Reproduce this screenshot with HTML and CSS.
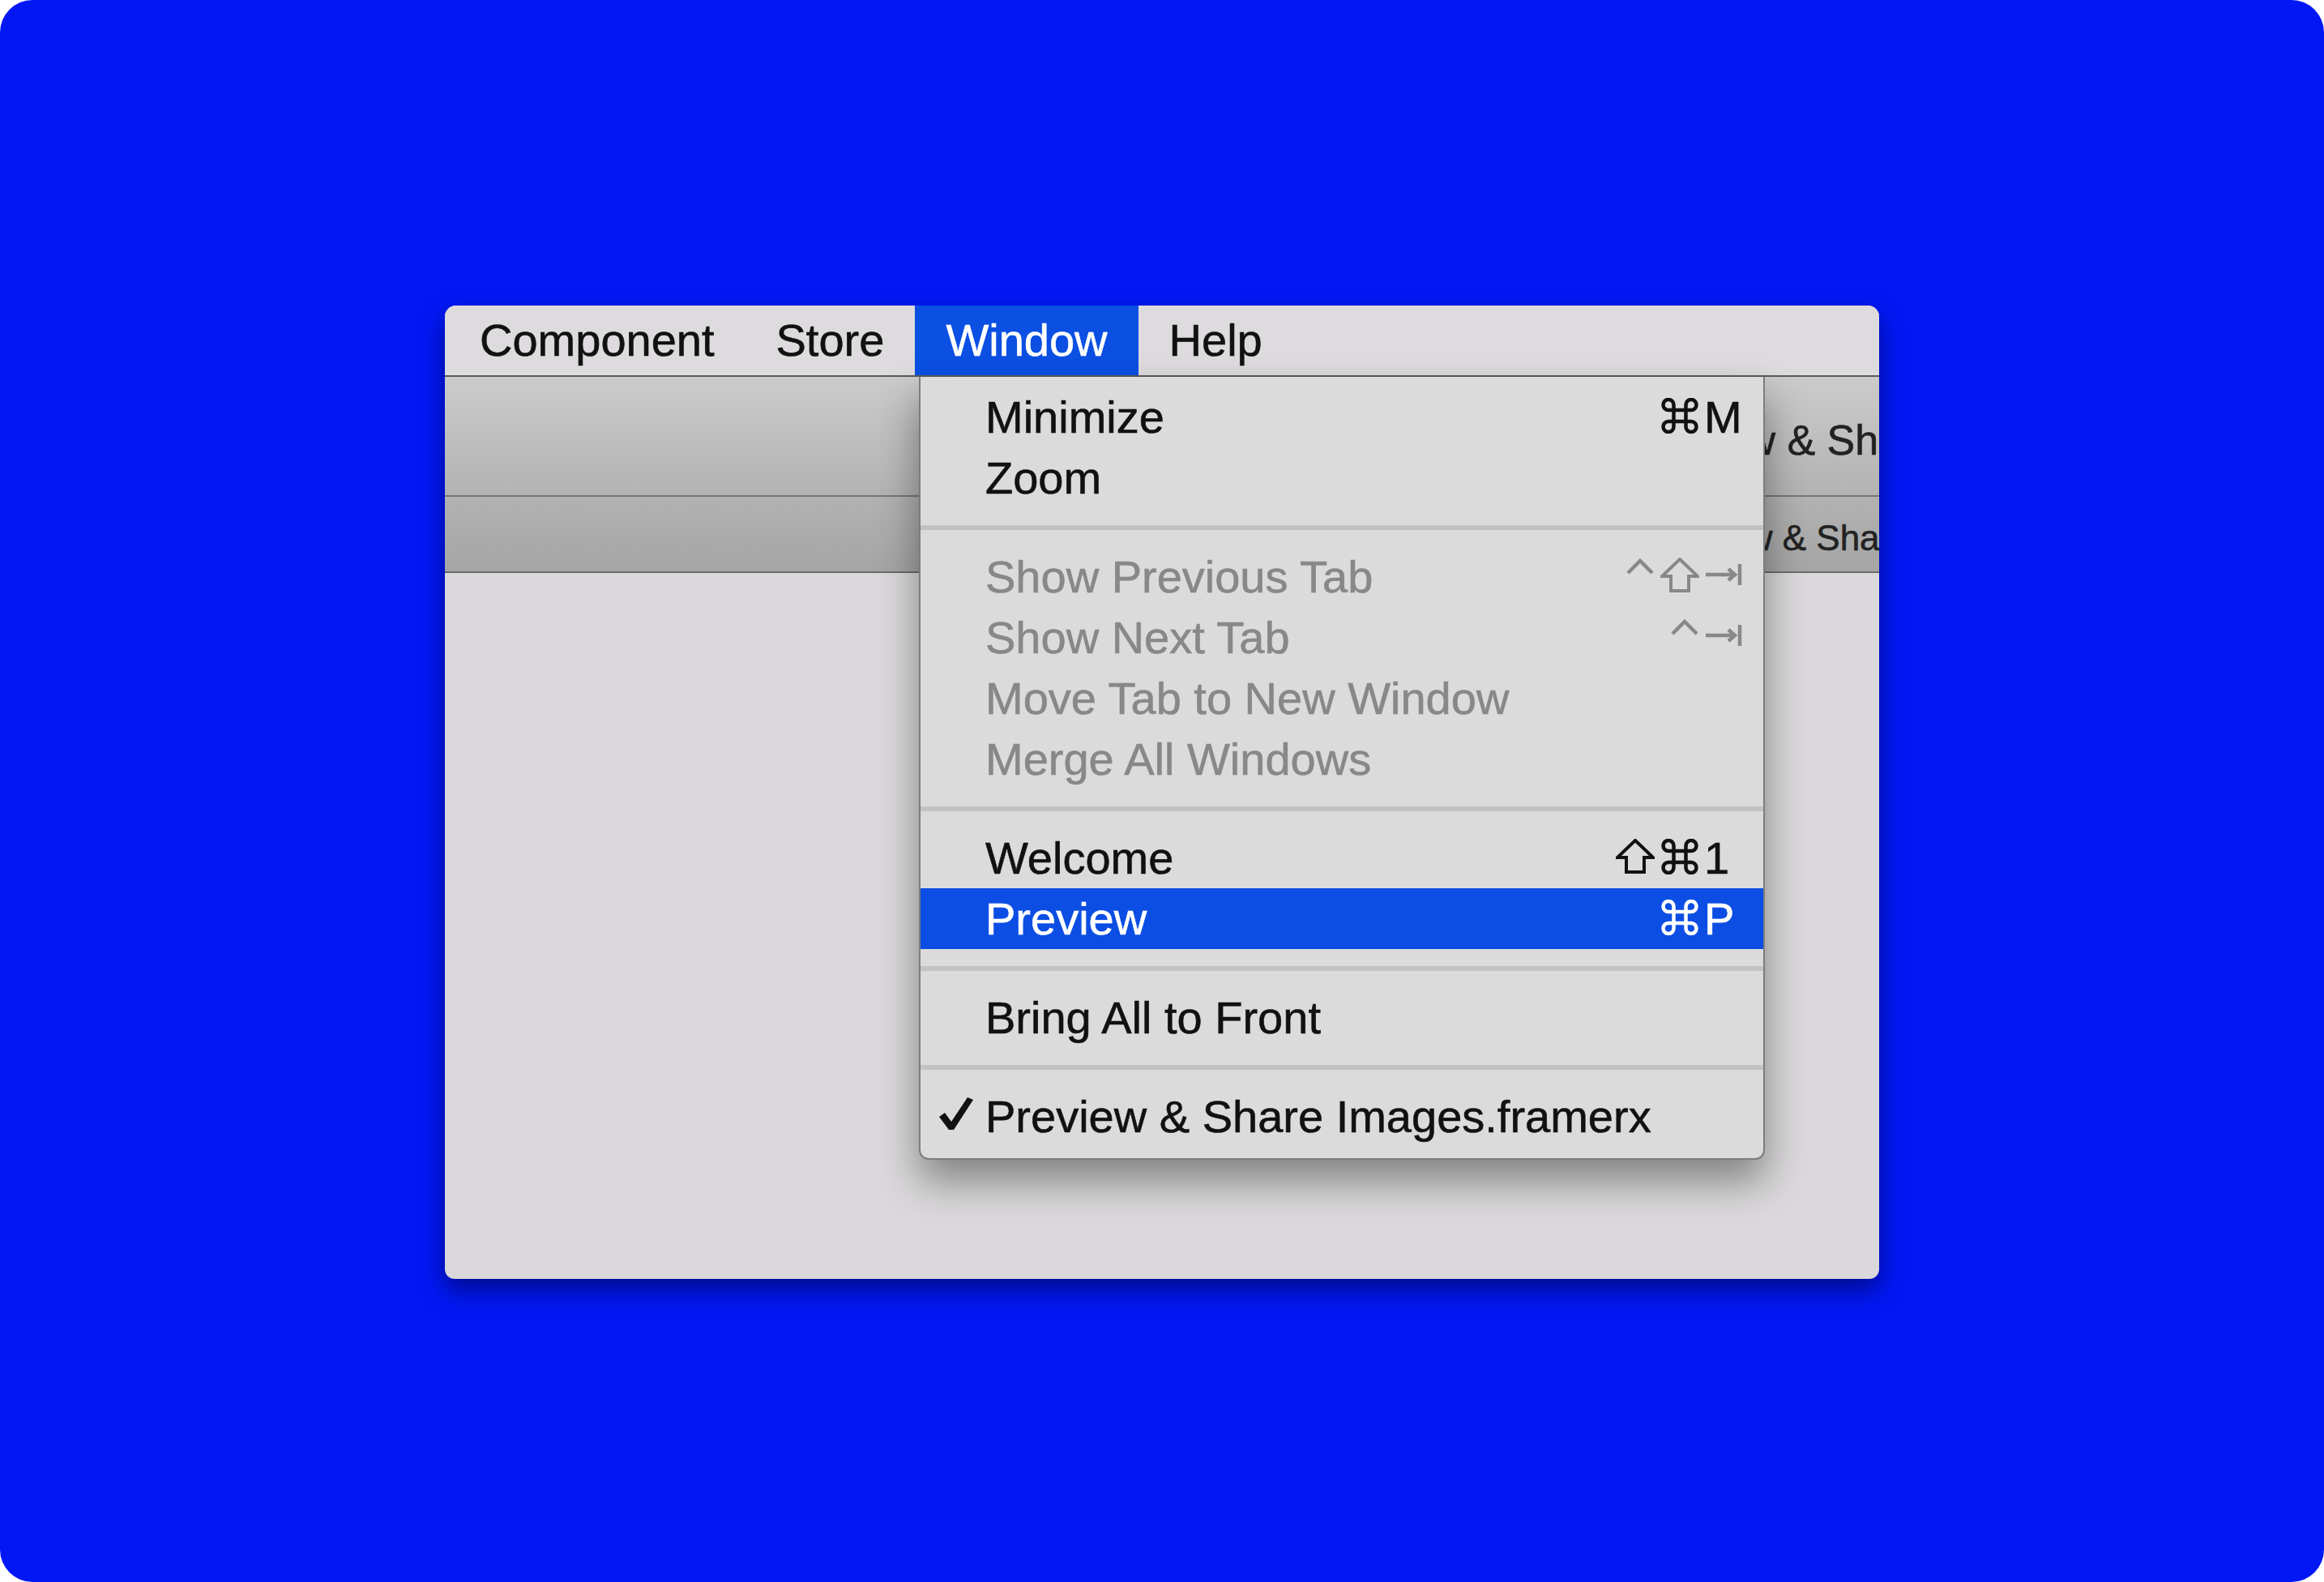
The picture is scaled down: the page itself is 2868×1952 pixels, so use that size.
FILE: index.html
```html
<!DOCTYPE html>
<html lang="en">
<head>
  <meta charset="UTF-8">
  <meta name="viewport" content="width=device-width, initial-scale=1.0">
  <title>Window menu</title>
  <link rel="stylesheet" href="styles.css">
</head>
<body>
  <!-- key glyphs, drawn once and reused -->
  <svg class="defs" aria-hidden="true">
    <symbol id="g-cmd" viewBox="0 0 48 44">
      <path d="M16.5 15H31.5V29H16.5Z M16.5 15V8.5A6.5 6.5 0 1 0 10 15H16.5 M31.5 15V8.5A6.5 6.5 0 1 1 38 15H31.5 M31.5 29V35.5A6.5 6.5 0 1 0 38 29H31.5 M16.5 29V35.5A6.5 6.5 0 1 1 10 29H16.5" fill="none" stroke="currentColor" stroke-width="4.5"/>
    </symbol>
    <symbol id="g-shift" viewBox="0 0 48 44">
      <path d="M24 2L46 23H35V41H13V23H2Z" fill="none" stroke="currentColor" stroke-width="4" stroke-linejoin="miter"/>
    </symbol>
    <symbol id="g-ctrl" viewBox="0 0 36 44">
      <path d="M3 19L18 4L33 19" fill="none" stroke="currentColor" stroke-width="4.5"/>
    </symbol>
    <symbol id="g-tab" viewBox="0 0 48 44">
      <path d="M2 21H38 M30 14L38 21L30 28 M44 8V34" fill="none" stroke="currentColor" stroke-width="4.5"/>
    </symbol>
    <symbol id="g-check" viewBox="0 0 42 40">
      <path d="M0 24L7 19L15 30L35 0L42 3L18 40L12 40Z" fill="currentColor"/>
    </symbol>
  </svg>

  <div class="stage">
    <div class="window">
      <div class="menubar">
        <span class="menubar-item">Component</span>
        <span class="menubar-item">Store</span>
        <span class="menubar-item is-open">Window</span>
        <span class="menubar-item">Help</span>
      </div>
      <div class="toolbar"><span class="title">Preview &amp; Share Images.framerx</span></div>
      <div class="tabbar"><span class="tab-title">Preview &amp; Share Images.framerx</span></div>
      <div class="content"></div>

      <div class="menu">
        <div class="item">
          <span class="mark"></span>
          <span class="label">Minimize</span>
          <span class="keys">
            <span class="mods"><svg class="g-wide"><use href="#g-cmd"/></svg></span>
            <span class="key">M</span>
          </span>
        </div>
        <div class="item">
          <span class="mark"></span>
          <span class="label">Zoom</span>
        </div>
        <div class="sep"></div>
        <div class="item is-disabled">
          <span class="mark"></span>
          <span class="label">Show Previous Tab</span>
          <span class="keys">
            <span class="mods"><svg class="g-narrow"><use href="#g-ctrl"/></svg><svg class="g-wide"><use href="#g-shift"/></svg></span>
            <span class="key"><svg class="g-wide"><use href="#g-tab"/></svg></span>
          </span>
        </div>
        <div class="item is-disabled">
          <span class="mark"></span>
          <span class="label">Show Next Tab</span>
          <span class="keys">
            <span class="mods"><svg class="g-narrow"><use href="#g-ctrl"/></svg></span>
            <span class="key"><svg class="g-wide"><use href="#g-tab"/></svg></span>
          </span>
        </div>
        <div class="item is-disabled">
          <span class="mark"></span>
          <span class="label">Move Tab to New Window</span>
        </div>
        <div class="item is-disabled">
          <span class="mark"></span>
          <span class="label">Merge All Windows</span>
        </div>
        <div class="sep"></div>
        <div class="item">
          <span class="mark"></span>
          <span class="label">Welcome</span>
          <span class="keys">
            <span class="mods"><svg class="g-wide"><use href="#g-shift"/></svg><svg class="g-wide"><use href="#g-cmd"/></svg></span>
            <span class="key">1</span>
          </span>
        </div>
        <div class="item is-active">
          <span class="mark"></span>
          <span class="label">Preview</span>
          <span class="keys">
            <span class="mods"><svg class="g-wide"><use href="#g-cmd"/></svg></span>
            <span class="key">P</span>
          </span>
        </div>
        <div class="sep"></div>
        <div class="item">
          <span class="mark"></span>
          <span class="label">Bring All to Front</span>
        </div>
        <div class="sep"></div>
        <div class="item">
          <span class="mark"><svg class="g-check"><use href="#g-check"/></svg></span>
          <span class="label">Preview &amp; Share Images.framerx</span>
        </div>
      </div>
    </div>
  </div>
</body>
</html>
```

FILE: styles.css
```css
body {
  margin: 0;
  background-color: #fff;
}
.defs {
  position: absolute;
  width: 0;
  height: 0;
  overflow: hidden;
}
.stage {
  width: 2868px;
  height: 1952px;
  background-color: #0118f5;
  border-radius: 40px;
  display: flex;
  justify-content: center;
  align-items: center;
  font-family: "Liberation Sans", Arial, sans-serif;
  -webkit-text-stroke: 0.6px currentColor;
}
.window {
  position: relative;
  width: 1770px;
  height: 1201px;
  margin-top: 3px;
  background-color: #dad8da;
  border-radius: 14px 14px 12px 12px;
  overflow: hidden;
  box-shadow: 0 14px 30px rgba(0, 0, 40, 0.5);
  display: flex;
  flex-direction: column;
}
.menubar {
  flex-shrink: 0;
  height: 86px;
  padding-left: 5px;
  display: flex;
  background-color: #dddbdd;
  border-bottom: 2px solid #5a5a5a;
}
.menubar-item {
  padding: 0 38px;
  font-size: 56px;
  line-height: 86px;
  color: #111;
}
.menubar-item.is-open {
  background-color: #0b4fe3;
  color: #fff;
}
.toolbar {
  flex-shrink: 0;
  height: 136px;
  padding: 10px 0 0 1457px;
  display: flex;
  align-items: center;
  white-space: nowrap;
  background: linear-gradient(#cbcbcb, #b3b3b3);
  border-bottom: 2px solid #777;
}
.title {
  font-size: 52px;
  color: #222;
}
.tabbar {
  flex-shrink: 0;
  height: 82px;
  padding: 10px 0 0 1482px;
  display: flex;
  align-items: center;
  white-space: nowrap;
  background: linear-gradient(#b2b2b2, #a5a5a5);
  border-bottom: 2px solid #6c6c6c;
}
.tab-title {
  font-size: 44px;
  color: #222;
}
.content {
  flex: 1;
}

/* dropdown */
.menu {
  position: absolute;
  left: 585px;
  top: 88px;
  width: 1044px;
  box-sizing: border-box;
  padding: 12px 0 14px;
  background-color: #dcdbdc;
  border: 2px solid #7d7d7d;
  border-top: 0;
  border-radius: 0 0 12px 12px;
  box-shadow: 0 26px 50px rgba(0, 0, 0, 0.4);
}
.item {
  height: 75px;
  padding: 0 17px 0 23px;
  display: flex;
  align-items: center;
  font-size: 56px;
  color: #111;
  white-space: nowrap;
}
.item.is-disabled {
  color: #888;
}
.item.is-active {
  background-color: #0c4ee3;
  color: #fff;
}
.mark {
  width: 57px;
  display: flex;
  align-items: center;
}
.label {
  flex: 1;
  line-height: 75px;
}
.keys {
  display: flex;
  align-items: center;
}
.mods {
  display: flex;
  align-items: center;
  gap: 7px;
  margin-bottom: 4px;
}
.key {
  width: 56px;
  margin-left: 6px;
  display: flex;
  align-items: center;
  line-height: 75px;
}
.key svg {
  margin-bottom: 4px;
}
.g-wide {
  width: 48px;
  height: 44px;
}
.g-narrow {
  width: 36px;
  height: 44px;
}
.g-check {
  width: 42px;
  height: 40px;
  margin-bottom: 8px;
}
.sep {
  height: 47px;
  display: flex;
  align-items: center;
}
.sep::before {
  content: "";
  flex: 1;
  height: 6px;
  background-color: #c3c1c3;
}
```
